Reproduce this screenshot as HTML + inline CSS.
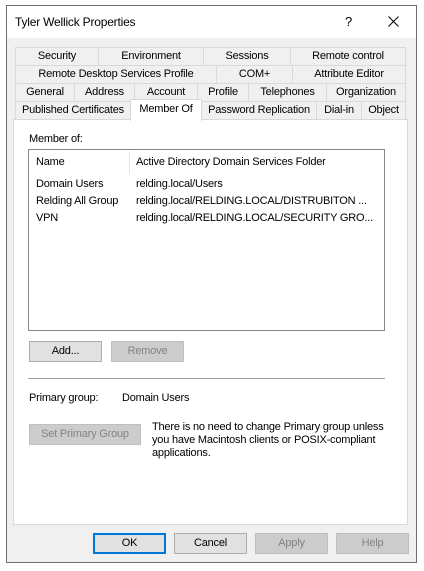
<!DOCTYPE html>
<html><head><style>
*{margin:0;padding:0;box-sizing:border-box}
body{width:424px;height:571px;background:#fff;font-family:"Liberation Sans",sans-serif;font-size:11px;letter-spacing:-0.2px;color:#000;position:relative;overflow:hidden}
.a{position:absolute;white-space:nowrap}
.win{position:absolute;left:6px;top:5px;width:411px;height:558px;border:1px solid #6e6e6e;background:#f0f0f0}
.title{position:absolute;left:7px;top:6px;width:409px;height:32px;background:#fff}
.tab{position:absolute;height:19px;border:1px solid #d9d9d9;background:#f0f0f0;text-align:center;line-height:17px;white-space:nowrap;overflow:hidden}
.panel{position:absolute;left:13px;top:119px;width:395px;height:406px;background:#fff;border:1px solid #d9d9d9}
.btn{position:absolute;height:21px;border:1px solid #adadad;background:#e1e1e1;text-align:center;line-height:19px;white-space:nowrap}
.dis{color:#838383;background:#cccccc;border-color:#bfbfbf}
</style></head><body>
<div class="win"></div>
<div class="title"></div>
<div class="a" style="left:15px;top:15px;font-size:12px">Tyler Wellick Properties</div>
<div class="a" style="left:345px;top:14px;font-size:13px">?</div>
<svg class="a" style="left:388px;top:16px" width="11" height="11"><path d="M0.5 0.5L10.5 10.5M10.5 0.5L0.5 10.5" stroke="#000" stroke-width="1"/></svg>

<div class="tab" style="left:15px;top:47px;width:84px">Security</div>
<div class="tab" style="left:98px;top:47px;width:106px">Environment</div>
<div class="tab" style="left:203px;top:47px;width:88px">Sessions</div>
<div class="tab" style="left:290px;top:47px;width:116px">Remote control</div>
<div class="tab" style="left:15px;top:65px;width:202px">Remote Desktop Services Profile</div>
<div class="tab" style="left:216px;top:65px;width:77px">COM+</div>
<div class="tab" style="left:292px;top:65px;width:114px">Attribute Editor</div>
<div class="tab" style="left:15px;top:83px;width:60px">General</div>
<div class="tab" style="left:74px;top:83px;width:61px">Address</div>
<div class="tab" style="left:134px;top:83px;width:64px">Account</div>
<div class="tab" style="left:197px;top:83px;width:52px">Profile</div>
<div class="tab" style="left:248px;top:83px;width:79px">Telephones</div>
<div class="tab" style="left:326px;top:83px;width:80px">Organization</div>
<div class="tab" style="left:15px;top:101px;width:116px">Published Certificates</div>
<div class="tab" style="left:201px;top:101px;width:116px">Password Replication</div>
<div class="tab" style="left:316px;top:101px;width:46px">Dial-in</div>
<div class="tab" style="left:361px;top:101px;width:45px">Object</div>
<div class="panel"></div>
<div class="tab" style="left:130px;top:99px;width:72px;height:22px;background:#fff;border-bottom:none;line-height:18px">Member Of</div>

<div class="a" style="left:29px;top:133px">Member of:</div>
<div class="a" style="left:28px;top:149px;width:357px;height:182px;border:1px solid #828790;background:#fff"></div>
<div class="a" style="left:129px;top:151px;width:1px;height:23px;background:#e5e5e5"></div>
<div class="a" style="left:36px;top:156px">Name</div>
<div class="a" style="left:136px;top:156px">Active Directory Domain Services Folder</div>
<div class="a" style="left:36px;top:178px">Domain Users</div>
<div class="a" style="left:136px;top:178px">relding.local/Users</div>
<div class="a" style="left:36px;top:195px">Relding All Group</div>
<div class="a" style="left:136px;top:195px">relding.local/RELDING.LOCAL/DISTRUBITON ...</div>
<div class="a" style="left:36px;top:212px">VPN</div>
<div class="a" style="left:136px;top:212px">relding.local/RELDING.LOCAL/SECURITY GRO...</div>

<div class="btn" style="left:29px;top:341px;width:73px">Add...</div>
<div class="btn dis" style="left:111px;top:341px;width:73px">Remove</div>
<div class="a" style="left:28px;top:378px;width:357px;height:1px;background:#a0a0a0"></div>
<div class="a" style="left:29px;top:392px">Primary group:</div>
<div class="a" style="left:122px;top:392px">Domain Users</div>
<div class="btn dis" style="left:29px;top:424px;width:112px">Set Primary Group</div>
<div class="a" style="left:152px;top:421px;line-height:13px">There is no need to change Primary group unless<br>you have Macintosh clients or POSIX-compliant<br>applications.</div>

<div class="btn" style="left:93px;top:533px;width:73px;border:2px solid #0078d7;line-height:17px">OK</div>
<div class="btn" style="left:174px;top:533px;width:73px">Cancel</div>
<div class="btn dis" style="left:255px;top:533px;width:73px">Apply</div>
<div class="btn dis" style="left:336px;top:533px;width:73px">Help</div>
</body></html>
